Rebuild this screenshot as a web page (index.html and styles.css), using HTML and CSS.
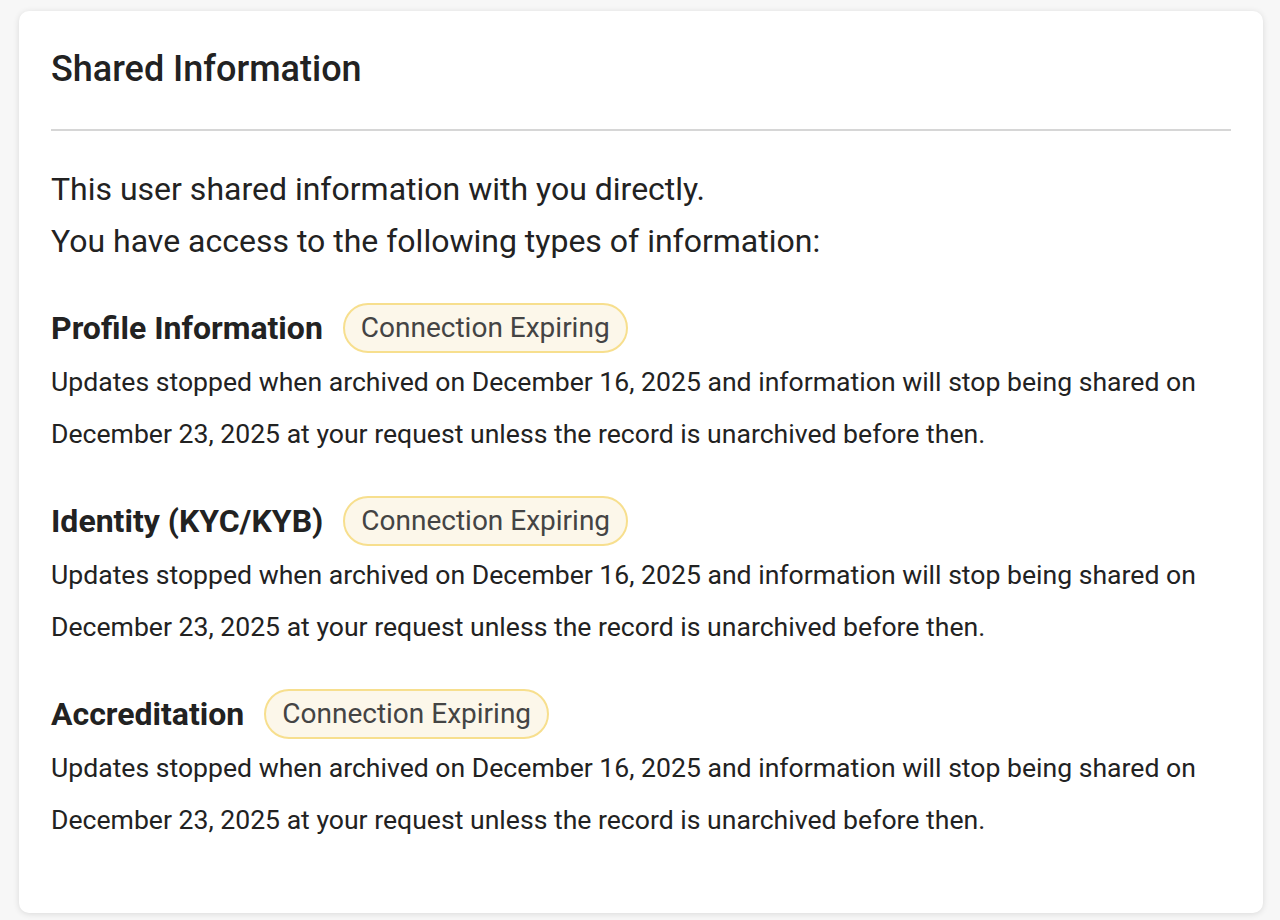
FILE: index.html
```html
<html lang="en">
<head>
    <meta charset="UTF-8">
    <meta name="viewport" content="width=device-width, initial-scale=1.0">
    <title>Shared Information</title>
    <link rel="stylesheet" href="styles.css">
</head>
<body>
    <div class="card">
        <h2 class="card-title">Shared Information</h2>
        <div class="card-body">
            <div class="intro">
                <p>This user shared information with you directly.</p>
                <p>You have access to the following types of information:</p>
            </div>

            <div class="info-type">
                <div class="info-head">
                    <h3>Profile Information</h3>
                    <span class="badge">Connection Expiring</span>
                </div>
                <p class="info-text">Updates stopped when archived on December 16, 2025 and information will stop being shared on December 23, 2025 at your request unless the record is unarchived before then.</p>
            </div>

            <div class="info-type">
                <div class="info-head">
                    <h3>Identity (KYC/KYB)</h3>
                    <span class="badge">Connection Expiring</span>
                </div>
                <p class="info-text">Updates stopped when archived on December 16, 2025 and information will stop being shared on December 23, 2025 at your request unless the record is unarchived before then.</p>
            </div>

            <div class="info-type">
                <div class="info-head">
                    <h3>Accreditation</h3>
                    <span class="badge">Connection Expiring</span>
                </div>
                <p class="info-text">Updates stopped when archived on December 16, 2025 and information will stop being shared on December 23, 2025 at your request unless the record is unarchived before then.</p>
            </div>
        </div>
    </div>
</body>
</html>
```

FILE: styles.css
```css
body {
    font-family: Roboto, "Noto Sans", sans-serif;
    margin: 0;
    padding: 11px 17px 7px 19px;
    background-color: #f7f7f7;
    color: #222;
}

.card {
    background-color: white;
    border-radius: 10px;
    box-shadow: 0 1px 6px rgba(0, 0, 0, 0.12);
    padding: 0 32px 40px;
    height: 902px;
    box-sizing: border-box;
}

.card-title {
    margin: 0;
    padding: 38px 0 40px;
    font-size: 36px;
    font-weight: 500;
    line-height: 40px;
    border-bottom: 2px solid #d6d6d6;
}

.card-body {
    padding-top: 32px;
}

.intro {
    margin-bottom: 2px;
}

.intro p {
    margin: 0;
    font-size: 32px;
    line-height: 52px;
}

.info-type {
    margin-top: 33px;
}

.info-head {
    display: flex;
    align-items: center;
    gap: 20px;
    height: 56px;
}

.info-head h3 {
    margin: 0;
    font-size: 32px;
    font-weight: 700;
}

.badge {
    display: inline-block;
    padding: 0 16px;
    height: 46px;
    line-height: 46px;
    font-size: 28px;
    color: #444;
    background-color: #fcf7ea;
    border: 2px solid #f7df8e;
    border-radius: 25px;
}

.info-text {
    margin: 0;
    font-size: 26.6px;
    line-height: 52px;
}
```
